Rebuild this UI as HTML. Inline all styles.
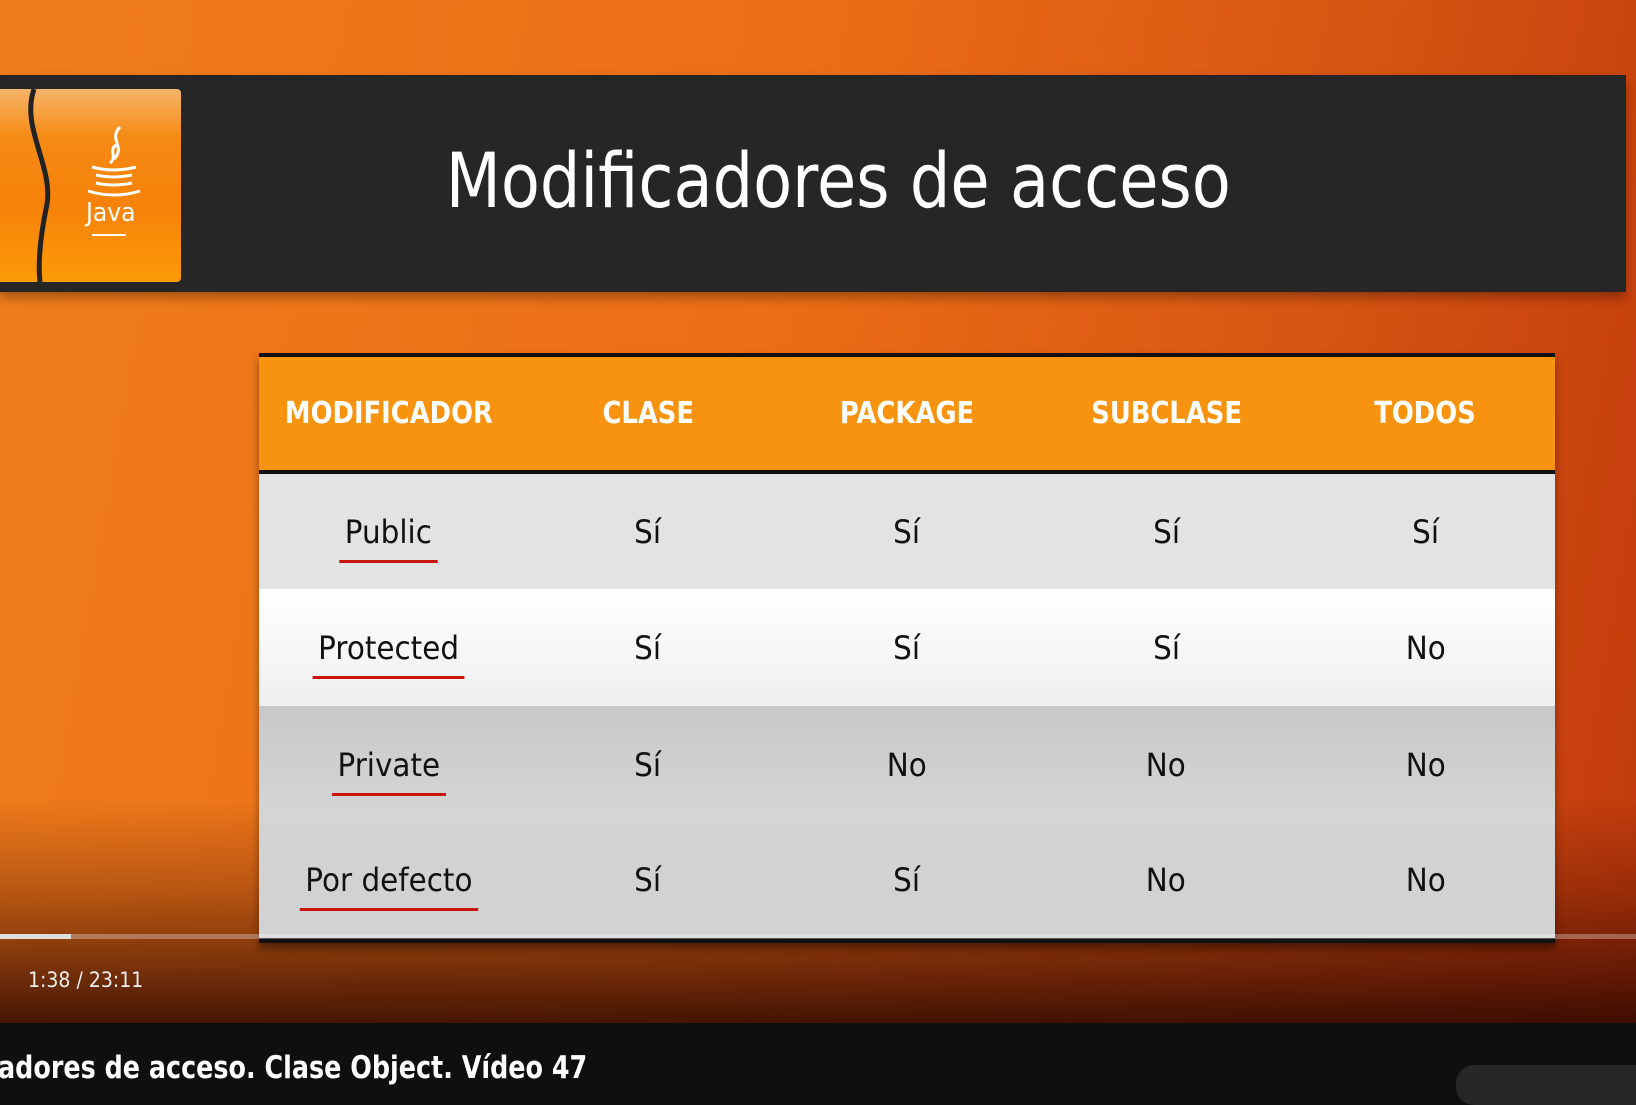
<!DOCTYPE html>
<html><head><meta charset="utf-8"><style>
*{margin:0;padding:0;box-sizing:border-box}
body{width:1636px;height:1090px;overflow:hidden;position:relative;font-family:"DejaVu Sans","Liberation Sans",sans-serif;background:#0f0f0f}
.bg{position:absolute;left:0;top:0;width:1636px;height:1023px;background:linear-gradient(100deg,#f07d1c 0%,#ec6e16 45%,#d85512 75%,#c23a0c 100%)}
.shade{position:absolute;left:0;top:0;width:1636px;height:1023px;background:linear-gradient(180deg,rgba(0,0,0,0) 0%,rgba(0,0,0,0) 78%,rgba(60,10,0,.3) 87%,rgba(50,8,0,.6) 94%,rgba(40,5,0,.85) 100%)}
.bar{position:absolute;left:0;top:75px;width:1626px;height:217px;background:#262626;box-shadow:0 6px 10px rgba(0,0,0,.3)}
.logo{position:absolute;left:0;top:89px;width:181px;height:193px;background:linear-gradient(180deg,#f7b46a 0%,#f58a14 25%,#f7820a 60%,#fb9a06 100%);border-radius:0 4px 4px 0}
.title{position:absolute;left:0;width:1676px;top:136px;text-align:center;color:#fff;font-size:76px}
.sx{display:inline-block;transform:scaleX(.84)}
table{position:absolute;left:259px;top:353px;width:1296px;border-collapse:collapse;box-shadow:0 6px 8px rgba(0,0,0,.4)}
td,th{width:259px;text-align:center}
th{height:117px;background:#f7930e;color:#fff;font-size:30px;font-weight:bold;border-top:4px solid #111;border-bottom:4px solid #111}
th span{display:inline-block;transform:scaleX(.86)}
td{font-size:32px;color:#111;height:117px}
td span{display:inline-block;transform:scaleX(.92)}
.r1 td{background:#e3e3e3}
.r2 td{background:linear-gradient(#fff,#efefef)}
.r3 td{background:linear-gradient(#c8c8c8,#d6d6d6)}
.r4 td{background:#d2d2d2;border-bottom:5px solid #111}
td span.u{position:relative}
td span.u::after{content:"";position:absolute;left:-6px;right:-6px;bottom:-12px;height:3px;background:#c8160f}
.prog{position:absolute;left:0;top:934px;width:1636px;height:5px;background:rgba(255,255,255,.3)}
.time{position:absolute;left:28px;top:968px;color:#eee;font-size:21px;transform:scaleX(.9);transform-origin:left}
.vt{position:absolute;left:-2px;top:1050px;color:#fff;font-size:31px;font-weight:bold;white-space:nowrap;transform:scaleX(.82);transform-origin:left}
.box{position:absolute;left:1456px;top:1065px;width:200px;height:40px;background:#272727;border-radius:18px}
</style></head><body>
<div class="bg"></div><div class="shade"></div>
<div class="bar"></div>
<div class="logo">
<svg width="181" height="193" viewBox="0 0 181 193">
<path d="M34 0 C20 40 56 80 46 120 C40 150 38 175 40 193" stroke="#222" stroke-width="5" fill="none"/>
<g fill="none" stroke="#fff" stroke-width="3">
<path d="M120 38 C108 50 126 58 114 70"/><path d="M116 56 C108 62 118 68 110 74"/>
<path d="M92 78 Q114 84 136 78"/><path d="M96 86 Q114 90 132 86"/><path d="M96 94 Q114 98 132 94"/>
<path d="M88 102 Q114 110 140 102"/>
<path d="M92 146 L126 146" stroke-width="2"/>
</g>
<text x="86" y="132" fill="#fff" font-size="26" font-family="DejaVu Sans Condensed,DejaVu Sans,sans-serif">Java</text>
</svg></div>
<div class="title"><span class="sx">Modificadores de acceso</span></div>
<table>
<tr><th><span>MODIFICADOR</span></th><th><span>CLASE</span></th><th><span>PACKAGE</span></th><th><span>SUBCLASE</span></th><th><span>TODOS</span></th></tr>
<tr class="r1"><td><span class="u">Public</span></td><td><span>Sí</span></td><td><span>Sí</span></td><td><span>Sí</span></td><td><span>Sí</span></td></tr>
<tr class="r2"><td><span class="u">Protected</span></td><td><span>Sí</span></td><td><span>Sí</span></td><td><span>Sí</span></td><td><span>No</span></td></tr>
<tr class="r3"><td><span class="u">Private</span></td><td><span>Sí</span></td><td><span>No</span></td><td><span>No</span></td><td><span>No</span></td></tr>
<tr class="r4"><td><span class="u">Por defecto</span></td><td><span>Sí</span></td><td><span>Sí</span></td><td><span>No</span></td><td><span>No</span></td></tr>
</table>
<div class="prog"><div style="width:71px;height:5px;background:#ddd"></div></div>
<div class="time">1:38 / 23:11</div>
<div class="vt">adores de acceso. Clase Object. Vídeo 47</div>
<div class="box"></div>
</body></html>
